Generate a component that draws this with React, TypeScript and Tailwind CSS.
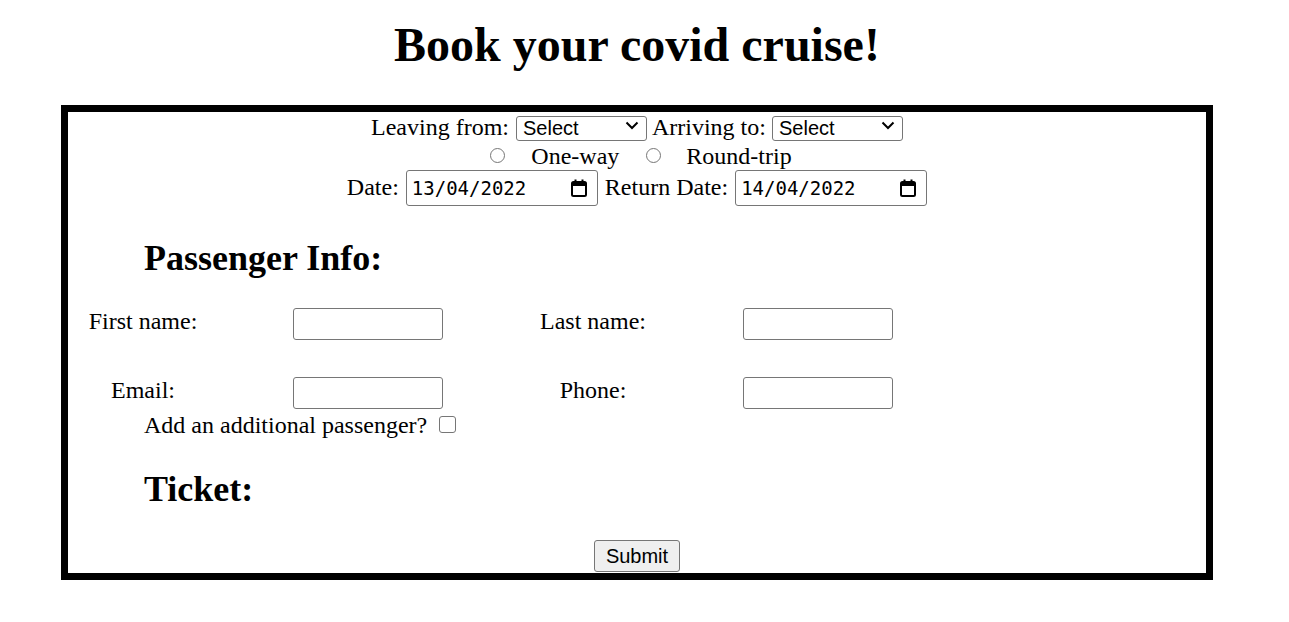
const serif = "font-['Liberation_Serif',serif]";
const sans = "font-['Liberation_Sans',Arial,sans-serif]";

function Chevron() {
    return (
        <svg className="pointer-events-none absolute right-[8px] top-[8px]" width="14" height="9" viewBox="0 0 14 9">
            <path d="M1.5 1.5l5.5 5.5 5.5-5.5" fill="none" stroke="black" strokeWidth="2" />
        </svg>
    );
}

function FakeSelect({ label }: { label: string }) {
    return (
        <div className="relative">
            <select
                aria-label={label}
                className={`${sans} appearance-none w-[131px] h-[25px] pl-[6px] text-[20px] leading-[23px] text-black bg-white border border-[#767676] rounded-[3px]`}
            >
                <option>Select</option>
            </select>
            <Chevron />
        </div>
    );
}

function CalendarIcon() {
    return (
        <svg className="pointer-events-none absolute right-[10px] top-[9px]" width="18" height="18" viewBox="0 0 18 18">
            <rect x="2" y="3" width="14" height="14" rx="1.5" fill="none" stroke="black" strokeWidth="2" />
            <rect x="2" y="3" width="14" height="4" fill="black" />
            <rect x="4.5" y="0.5" width="2" height="3.5" fill="black" />
            <rect x="11.5" y="0.5" width="2" height="3.5" fill="black" />
        </svg>
    );
}

function DateBox({ value, label }: { value: string, label: string }) {
    return (
        <div className="relative">
            <input
                type="text"
                readOnly
                aria-label={label}
                defaultValue={value}
                className="w-[192px] h-[36px] pl-[5px] font-['DejaVu_Sans_Mono',monospace] text-[19px] text-black bg-white border border-[#767676] rounded-[3px]"
            />
            <CalendarIcon />
        </div>
    );
}

function TextBox({ label }: { label: string }) {
    return (
        <input
            type="text"
            aria-label={label}
            className="w-[150px] h-[32px] bg-white border border-[#767676] rounded-[3px]"
        />
    );
}

function Radio({ name }: { name: string }) {
    return (
        <input
            type="radio"
            name="trip"
            aria-label={name}
            className="appearance-none shrink-0 block w-[15px] h-[15px] rounded-full border-[1.5px] border-[#767676] bg-white"
        />
    );
}

export default function App() {
    return (
        <div className={`min-h-screen bg-white text-black ${serif}`}>
            <h1 className="text-center font-bold text-[48px] leading-[56px] pt-[17px] mb-[32px] w-[1274px]">
                Book your covid cruise!
            </h1>

            <div className="ml-[61px] w-[1152px] border-[7px] border-black pb-[1px]">
                <div className="flex justify-center items-center h-[30px] text-[24px] leading-[28px]">
                    <span>Leaving from:</span>
                    <div className="ml-[7px] mr-[5px]">
                        <FakeSelect label="Leaving from" />
                    </div>
                    <span>Arriving to:</span>
                    <div className="ml-[6px]">
                        <FakeSelect label="Arriving to" />
                    </div>
                </div>

                <div className="flex justify-center items-center h-[27px] text-[24px] leading-[28px] pl-[8px]">
                    <Radio name="One-way" />
                    <span className="ml-[26px]">One-way</span>
                    <div className="ml-[27px]">
                        <Radio name="Round-trip" />
                    </div>
                    <span className="ml-[25px]">Round-trip</span>
                </div>

                <div className="flex justify-center items-center h-[38px] text-[24px] leading-[28px]">
                    <span className="-mt-[2px]">Date:</span>
                    <div className="ml-[7px] mr-[7px]">
                        <DateBox value="13/04/2022" label="Date" />
                    </div>
                    <span className="-mt-[2px]">Return Date:</span>
                    <div className="ml-[7px]">
                        <DateBox value="14/04/2022" label="Return Date" />
                    </div>
                </div>

                <h2 className="ml-[76px] mt-[30px] font-bold text-[36px] leading-[42px]">Passenger Info:</h2>

                <div className="ml-[12px] mt-[29px] grid grid-cols-[126px_324px_126px_324px] gap-y-[37px] text-[24px] leading-[26px]">
                    <span className="justify-self-center">First name:</span>
                    <div className="justify-self-center"><TextBox label="First name" /></div>
                    <span className="justify-self-center">Last name:</span>
                    <div className="justify-self-center"><TextBox label="Last name" /></div>

                    <span className="justify-self-center">Email:</span>
                    <div className="justify-self-center"><TextBox label="Email" /></div>
                    <span className="justify-self-center">Phone:</span>
                    <div className="justify-self-center"><TextBox label="Phone" /></div>
                </div>

                <div className="ml-[76px] mt-[3px] flex items-center text-[24px] leading-[26px]">
                    <span>Add an additional passenger?</span>
                    <input
                        type="checkbox"
                        aria-label="Add an additional passenger"
                        className="appearance-none ml-[12px] w-[17px] h-[17px] -mt-[2px] rounded-[3px] border border-[#767676] bg-white"
                    />
                </div>

                <h2 className="ml-[76px] mt-[30px] font-bold text-[36px] leading-[42px]">Ticket:</h2>

                <div className="flex justify-center mt-[30px]">
                    <button className={`${sans} w-[86px] h-[32px] text-[20px] bg-[#efefef] border border-[#767676] rounded-[3px]`}>
                        Submit
                    </button>
                </div>
            </div>
        </div>
    );
}
